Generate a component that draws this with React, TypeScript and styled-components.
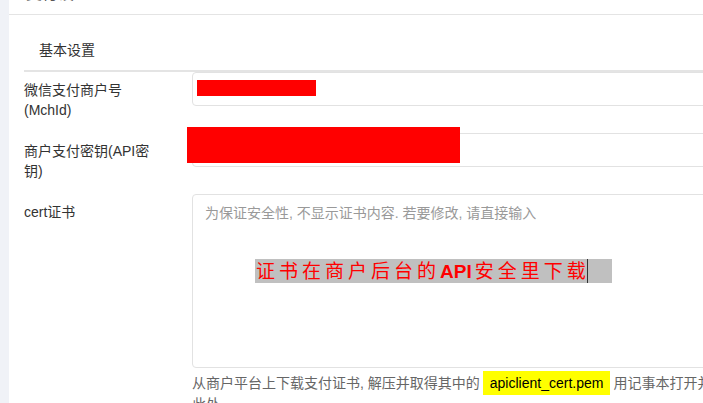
import React from "react";
import styled, { createGlobalStyle } from "styled-components";

const GlobalStyle = createGlobalStyle`
  html, body {
    margin: 0;
    padding: 0;
    overflow: hidden;
    background: #f0f2f7;
    font-family: "Liberation Sans", "Noto Sans CJK SC", sans-serif;
  }
`;

const Page = styled.div`
  padding-left: 9px;
`;

const Panel = styled.div`
  width: 1000px;
  min-height: 403px;
  background: #fff;
`;

const Header = styled.div`
  height: 14px;
  border-bottom: 1px solid #e4e4e4;
  padding-left: 17px;
  display: flex;
  align-items: flex-end;
  overflow: hidden;
`;

const Title = styled.div`
  font-size: 16px;
  line-height: 16px;
  margin-bottom: 12px;
  color: #555;
`;

const Body = styled.div`
  padding: 15px 15px 0;
`;

const TabBar = styled.div`
  display: flex;
  border-bottom: 2px solid #e4e4e4;
`;

const Tab = styled.div`
  padding: 0 15px;
  height: 40px;
  line-height: 40px;
  font-size: 14px;
  color: #333;
`;

const Form = styled.div`
  display: flex;
  flex-direction: column;
  gap: 13px;
`;

const Row = styled.div`
  display: grid;
  grid-template-columns: 168px 1fr;
  align-items: start;
`;

const Label = styled.div`
  width: 140px;
  padding-top: 8px;
  font-size: 14px;
  line-height: 20px;
  color: #333;
`;

const Field = styled.div`
  position: relative;
`;

const Input = styled.div`
  height: 34px;
  box-sizing: border-box;
  border: 1px solid #e2e2e2;
  border-radius: 4px;
  background: #fff;
`;

const Redact = styled.div<{ $l: number; $t: number; $w: number; $h: number }>`
  position: absolute;
  left: ${(p) => p.$l}px;
  top: ${(p) => p.$t}px;
  width: ${(p) => p.$w}px;
  height: ${(p) => p.$h}px;
  background: #ff0000;
`;

const TextBox = styled.div`
  height: 174px;
  box-sizing: border-box;
  border: 1px solid #e2e2e2;
  border-radius: 4px;
  padding: 8px 12px;
`;

const Placeholder = styled.div`
  font-size: 14px;
  line-height: 20px;
  color: #999;
`;

const Mark = styled.div`
  display: inline-flex;
  align-items: center;
  height: 24px;
  margin: 36px 0 0 50px;
  padding: 0 24px 0 1px;
  background: #c0c0c0;
`;

const RedText = styled.span`
  font-family: "Noto Sans CJK SC", sans-serif;
  font-size: 19px;
  line-height: 24px;
  letter-spacing: 4px;
  color: #ff0000;

  b {
    font-family: "Liberation Sans", sans-serif;
    font-weight: bold;
    letter-spacing: 0;
    margin-right: 3px;
  }
`;

const Caret = styled.span`
  width: 1px;
  height: 24px;
  margin-left: -3px;
  background: #333;
`;

const Help = styled.div`
  margin-top: 5px;
  font-size: 14px;
  line-height: 21px;
  color: #666;
  white-space: nowrap;
`;

const Hl = styled.span`
  background: #ffff00;
  color: #000;
  font-size: 14px;
  padding: 4px 7px;
  margin: 0 3px;
`;

export default function App() {
  return (
    <Page>
      <GlobalStyle />
      <Panel>
        <Header>
          <Title>支付设置</Title>
        </Header>
        <Body>
          <TabBar>
            <Tab>基本设置</Tab>
          </TabBar>
          <Form>
            <Row>
              <Label>微信支付商户号 (MchId)</Label>
              <Field>
                <Input />
                <Redact $l={5} $t={8} $w={119} $h={16} />
              </Field>
            </Row>
            <Row>
              <Label>商户支付密钥(API密钥)</Label>
              <Field>
                <Input />
                <Redact $l={-5} $t={-6} $w={273} $h={36} />
              </Field>
            </Row>
            <Row>
              <Label>cert证书</Label>
              <Field>
                <TextBox>
                  <Placeholder>为保证安全性, 不显示证书内容. 若要修改, 请直接输入</Placeholder>
                  <Mark>
                    <RedText>
                      证书在商户后台的<b>API</b>安全里下载
                    </RedText>
                    <Caret />
                  </Mark>
                </TextBox>
                <Help>
                  从商户平台上下载支付证书, 解压并取得其中的<Hl>apiclient_cert.pem</Hl>用记事本打开并复制文件内容, 填写在
                  <br />
                  此处
                </Help>
              </Field>
            </Row>
          </Form>
        </Body>
      </Panel>
    </Page>
  );
}
